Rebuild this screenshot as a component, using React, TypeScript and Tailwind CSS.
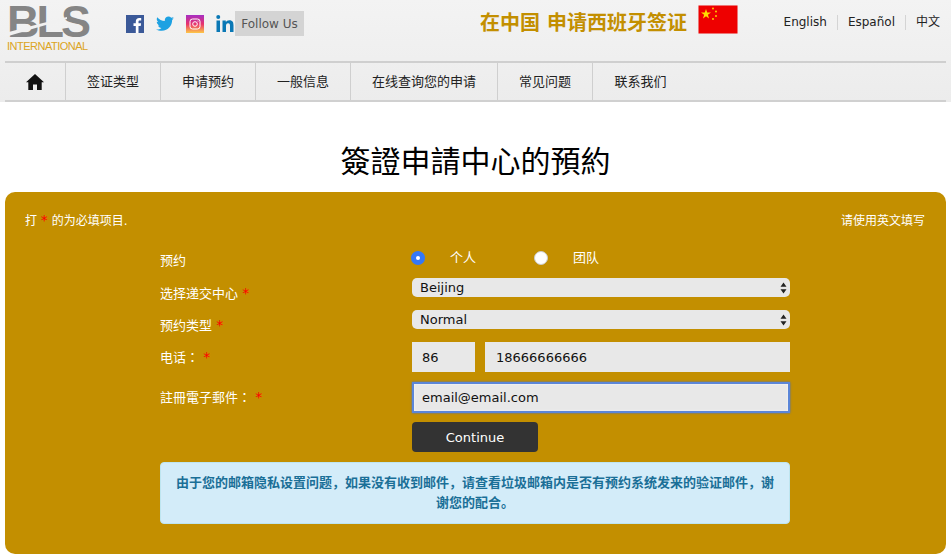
import React from "react";

const CJK = "font-['DejaVu_Sans','Noto_Sans_CJK_SC',sans-serif]";

function Star() {
  return <span className="text-[14px] leading-none text-[#ff0000]">*</span>;
}

function Arrows() {
  return (
    <svg width="7" height="12" viewBox="0 0 7 12" className="absolute right-[3px] top-[3.5px]">
      <path d="M3.5 0.5 L6.5 4.8 H0.5 Z M3.5 11.5 L6.5 7.2 H0.5 Z" fill="#222" />
    </svg>
  );
}

function Field({ label, star, first, tc, className, children }: { label: string; star?: boolean; first?: boolean; tc?: boolean; className: string; children: React.ReactNode }) {
  return (
    <div className={"flex " + className}>
      <div
        className={
          "w-[252px] shrink-0 text-[13px] leading-[16px] text-white " +
          (first ? "pt-[1px] " : "pt-[8px] ") +
          (tc ? "font-['DejaVu_Sans','Noto_Sans_CJK_TC',sans-serif]" : "")
        }
      >
        {label}
        {star && <> <Star /></>}
      </div>
      <div className="w-[378px]">{children}</div>
    </div>
  );
}

function Sel({ value }: { value: string }) {
  return (
    <div className="relative h-[19px] w-full rounded-[5px] bg-[#e8e8e8] pl-[8px] text-[13px] leading-[19px] text-[#111]">
      {value}
      <Arrows />
    </div>
  );
}

const nav = [
  ["签证类型", "w-[95px]"],
  ["申请预约", "w-[95px]"],
  ["一般信息", "w-[95px]"],
  ["在线查询您的申请", "w-[147px]"],
  ["常见问题", "w-[95px]"],
  ["联系我们", "w-[95px]"],
];

export default function App() {
  return (
    <div className={CJK + " h-[560px] w-[951px] overflow-hidden bg-white"}>
      <header className="h-[102px] bg-gradient-to-b from-[#f3f3f3] to-[#ececec] px-[5px]">
        <div className="flex h-[61px] items-start">
          <div className="relative mt-[3px] h-[50px] w-[84px] shrink-0 pl-[2px]">
            <div className="h-[37px] font-['Liberation_Sans',sans-serif] text-[45px] font-bold leading-[37px] tracking-[-3px] text-[#858585]">BLS</div>
            <div className="mt-[2px] font-['Liberation_Sans',sans-serif] text-[11px] leading-[9px] tracking-[-0.5px] text-[#dca422] whitespace-nowrap">INTERNATIONAL</div>
            <svg width="62" height="22" viewBox="0 0 62 22" className="absolute left-0 top-[14px]">
              <path d="M0 20 L34 10 L62 2 V0 L34 7 L0 16 Z" fill="#f1f1f1" />
            </svg>
          </div>
          <div className="ml-[37px] mt-[11px] flex h-[25px] items-center">
            <svg width="18" height="18" viewBox="0 0 18 18">
              <rect width="18" height="18" fill="#3b5998" />
              <path d="M12.5 18v-7h2.2l.4-2.7h-2.6V6.700c0-.8.3-1.300 1.300-1.300h1.400V3c-.3 0-1.100-.1-2-.1-2.100 0-3.400 1.200-3.400 3.500v1.900H7.500V11h2.300v7z" fill="#fff" />
            </svg>
            <svg width="18" height="16" viewBox="0 0 24 20" className="ml-[12px]">
              <path d="M24 2.400c-.9.400-1.800.7-2.800.8 1-.6 1.800-1.600 2.200-2.700-1 .6-2 1-3.100 1.200C19.300.7 18 .1 16.600.1c-2.700 0-4.900 2.200-4.900 4.900 0 .4 0 .8.100 1.100C7.700 5.900 4.100 4 1.700.9c-.4.700-.7 1.600-.7 2.500 0 1.700.9 3.200 2.200 4.100-.8 0-1.600-.2-2.200-.6v.1c0 2.400 1.700 4.400 3.900 4.800-.4.100-.8.200-1.300.2-.3 0-.6 0-.9-.1.600 2 2.400 3.400 4.600 3.400-1.700 1.300-3.800 2.100-6.100 2.100-.4 0-.8 0-1.200-.1C2.200 18.300 4.800 19.100 7.500 19.100c9.100 0 14-7.500 14-14v-.6c1-.7 1.800-1.600 2.500-2.100z" fill="#1da1e2" />
            </svg>
            <svg width="18" height="18" viewBox="0 0 18 18" className="ml-[12px]">
              <defs>
                <linearGradient id="ig" x1="0" y1="0" x2="0" y2="1">
                  <stop offset="0" stopColor="#a52fc4" />
                  <stop offset="0.5" stopColor="#e8316c" />
                  <stop offset="1" stopColor="#fdc947" />
                </linearGradient>
              </defs>
              <rect width="18" height="18" fill="url(#ig)" />
              <rect x="4" y="4" width="10" height="10" rx="2.500" fill="none" stroke="#fff" strokeWidth="1" />
              <circle cx="9" cy="9" r="2.300" fill="none" stroke="#fff" strokeWidth="1" />
              <circle cx="12" cy="6" r="0.600" fill="#fff" />
            </svg>
            <svg width="18" height="17" viewBox="0 0 18 17" className="ml-[12px]">
              <path d="M0.500 5.500h3.500V17H0.500zM2.250 0a2 2 0 1 1 0 4 2 2 0 0 1 0-4zM6.500 5.500h3.300v1.600c.6-1 1.800-1.900 3.500-1.900 3.600 0 4.200 2.400 4.200 5.400V17h-3.500v-5.700c0-1.400 0-3.100-1.900-3.100s-2.100 1.500-2.100 3V17H6.500z" fill="#0a78b5" />
            </svg>
            <div className="ml-[1px] flex h-[25px] w-[69px] items-center justify-center bg-[#d4d4d4] text-[12px] text-[#555]">Follow Us</div>
          </div>
          <div className="ml-[176px] mt-[9px] text-[20px] font-bold leading-[28px] tracking-normal text-[#c38f00] whitespace-pre">在中国 申请西班牙签证</div>
          <svg width="40" height="29" viewBox="0 0 40 29" className="ml-[11px] mt-[5px] shrink-0">
            <rect width="40" height="29" fill="#ee0000" stroke="#ececec" />
            <path d="M8 4 L9.200 7.600 L13 7.600 L9.900 9.800 L11 13.400 L8 11.200 L5 13.400 L6.100 9.800 L3 7.600 L6.800 7.600 Z" fill="#ffde00" />
            <circle cx="15" cy="3.500" r="0.900" fill="#ffde00" />
            <circle cx="18" cy="6.500" r="0.900" fill="#ffde00" />
            <circle cx="18" cy="11" r="0.900" fill="#ffde00" />
            <circle cx="15" cy="14" r="0.900" fill="#ffde00" />
          </svg>
          <div className="ml-auto mr-[6px] mt-[15px] flex text-[12px] leading-[15px] text-[#222]">
            <span className="border-r border-[#d4d4d4] pr-[10px]">English</span>
            <span className="border-r border-[#d4d4d4] px-[10px]">Español</span>
            <span className="pl-[10px]">中文</span>
          </div>
        </div>
        <nav className="flex h-[41px] items-stretch border-t-2 border-b-2 border-t-[#cfcfcf] border-b-[#d0d0d0] text-[13px] text-[#222]">
          <div className="flex w-[61px] items-center justify-center border-r border-[#cfcfcf]">
            <svg width="18" height="16" viewBox="0 0 18 16">
              <path d="M9 0 L18 8.300 L15.700 8.300 V16 H11 V10.500 H7 V16 H2.300 V8.300 H0 Z" fill="#111" />
            </svg>
          </div>
          {nav.map(([t, w]) => (
            <div key={t} className={w + " flex items-center justify-center border-r border-[#cfcfcf] last:border-r-0"}>{t}</div>
          ))}
        </nav>
      </header>

      <h1 className="mt-[41px] text-center text-[30px] font-normal leading-[38px] text-black">簽證申請中心的預約</h1>

      <main className="mx-[5px] mt-[11px] h-[362px] rounded-[10px] bg-[#c38f00] px-[20px]">
        <div className="flex justify-between pr-[1px] pt-[21px] text-[12px] leading-[16px] text-white">
          <span>打 <Star /> 的为必填项目.</span>
          <span>请使用英文填写</span>
        </div>
        <div className="ml-[135px] mt-[23px] w-[630px]">
          <Field label="预约" first className="h-[26px]">
            <div className="-mt-[2px] flex items-center text-[13px] leading-[16px] text-white">
              <span className="ml-[-1px] flex h-[14px] w-[14px] items-center justify-center rounded-full bg-[#3478f6]">
                <span className="h-[4px] w-[4px] rounded-full bg-white" />
              </span>
              <span className="ml-[25px]">个人</span>
              <span className="ml-[58px] h-[14px] w-[14px] rounded-full border border-[#ccc] bg-white" />
              <span className="ml-[25px]">团队</span>
            </div>
          </Field>
          <Field label="选择递交中心" star className="h-[32px]">
            <Sel value="Beijing" />
          </Field>
          <Field label="预约类型" star className="h-[32px]">
            <Sel value="Normal" />
          </Field>
          <Field label="电话：" star tc className="h-[40px]">
            <div className="flex gap-[10px] text-[13px] text-[#111]">
              <div className="flex h-[30px] w-[63px] items-center bg-[#e8e8e8] pl-[10px] pt-[1px]">86</div>
              <div className="flex h-[30px] flex-1 items-center bg-[#e8e8e8] pl-[11px] pt-[1px]">18666666666</div>
            </div>
          </Field>
          <Field label="註冊電子郵件：" star tc className="h-[40px]">
            <div className="flex h-[31px] w-[378px] items-center border-2 border-[#5b86d8] bg-[#e8e8e8] pl-[8px] text-[13px] text-[#111] shadow-[0_0_2px_#3f6fd0,inset_0_0_2px_#ffffff]">email@email.com</div>
          </Field>
          <div className="ml-[252px] flex h-[30px] w-[126px] items-center justify-center rounded-[4px] bg-[#333] pt-[1px] text-[13px] text-white">Continue</div>
          <div className="mt-[10px] flex h-[62px] w-[630px] items-center justify-center rounded-[4px] border border-[#bee5f0] bg-[#d3ecf9] px-[14px] text-center text-[13px] font-bold leading-[20px] text-[#1a6f97]">
            由于您的邮箱隐私设置问题，如果没有收到邮件，请查看垃圾邮箱内是否有预约系统发来的验证邮件，谢谢您的配合。
          </div>
        </div>
      </main>
    </div>
  );
}
